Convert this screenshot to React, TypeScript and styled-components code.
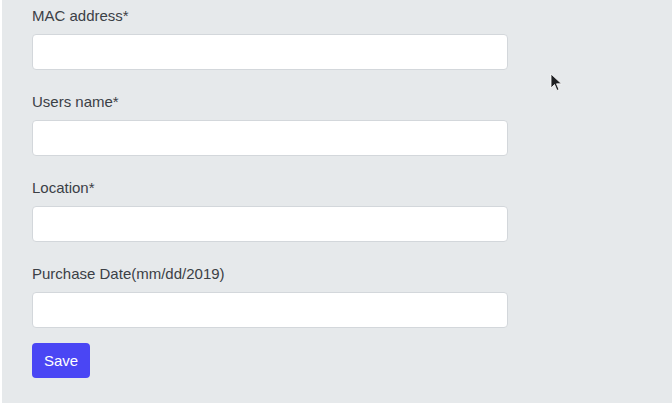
import React from 'react';
import styled, { createGlobalStyle } from 'styled-components';

const GlobalStyle = createGlobalStyle`
  html, body {
    margin: 0;
    padding: 0;
    background: #ffffff;
  }
  body {
    font-family: 'Liberation Sans', Arial, sans-serif;
  }
`;

const Page = styled.div`
  position: relative;
  margin-left: 2px;
  height: 403px;
  background: #e6e9eb;
  padding: 5px 0 0 30px;
  box-sizing: border-box;
  overflow: hidden;
`;

const Form = styled.form`
  display: flex;
  flex-direction: column;
  width: 476px;
`;

const Field = styled.div<{ $last?: boolean }>`
  display: flex;
  flex-direction: column;
  margin-bottom: ${(p) => (p.$last ? '15px' : '21px')};
`;

const Label = styled.label`
  font-size: 15px;
  line-height: 22px;
  color: #3b4046;
  margin-bottom: 7px;
`;

const Input = styled.input`
  height: 36px;
  box-sizing: border-box;
  border: 1px solid #d3d7db;
  border-radius: 4px;
  background: #ffffff;
  padding: 0 12px;
  font-size: 15px;
  font-family: inherit;
  outline: none;
`;

const SaveButton = styled.button`
  align-self: flex-start;
  height: 35px;
  padding: 0 12px;
  border: none;
  border-radius: 4px;
  background: #4a46f4;
  color: #ffffff;
  font-size: 15px;
  font-family: inherit;
  cursor: pointer;
`;

const Pointer = styled.svg`
  position: absolute;
  left: 548px;
  top: 73px;
`;

const fields = ['MAC address*', 'Users name*', 'Location*', 'Purchase Date(mm/dd/2019)'];

export default function App() {
  return (
    <>
      <GlobalStyle />
      <Page>
        <Form onSubmit={(e) => e.preventDefault()}>
          {fields.map((label, i) => (
            <Field key={label} $last={i === fields.length - 1}>
              <Label>{label}</Label>
              <Input type="text" />
            </Field>
          ))}
          <SaveButton type="submit">Save</SaveButton>
        </Form>
        <Pointer width="14" height="20" viewBox="0 0 14 20">
          <path d="M1 1 L1 15 L4.5 11.5 L7 17.5 L9 16.5 L6.5 10.8 L11.5 10.8 Z" fill="#1f2123" stroke="#ffffff" strokeWidth="0.8" />
        </Pointer>
      </Page>
    </>
  );
}
